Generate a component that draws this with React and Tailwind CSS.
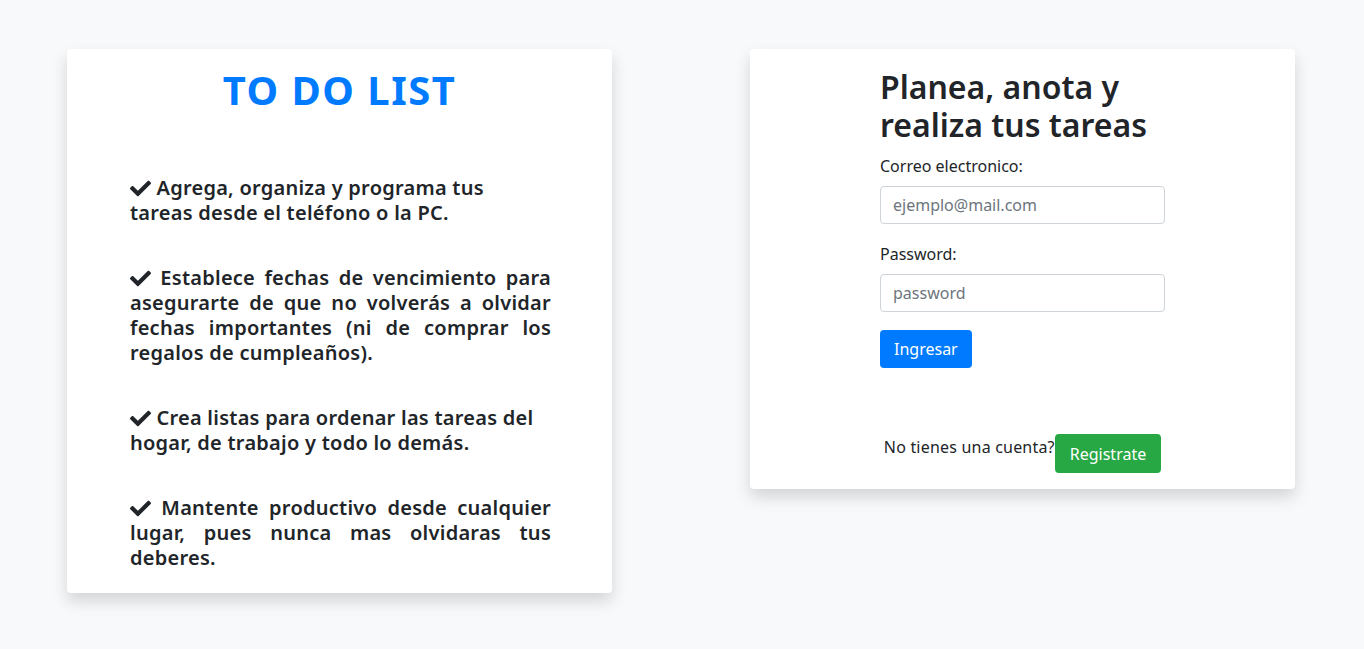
import { FaCheck } from "react-icons/fa";

const items = [
  {
    text: "Agrega, organiza y programa tus tareas desde el teléfono o la PC.",
    justify: false,
  },
  {
    text: "Establece fechas de vencimiento para asegurarte de que no volverás a olvidar fechas importantes (ni de comprar los regalos de cumpleaños).",
    justify: true,
  },
  {
    text: "Crea listas para ordenar las tareas del hogar, de trabajo y todo lo demás.",
    justify: false,
  },
  {
    text: "Mantente productivo desde cualquier lugar, pues nunca mas olvidaras tus deberes.",
    justify: true,
  },
];

const App = () => {
  return (
    <div
      className="min-h-screen bg-[#f8f9fa] text-[#212529]"
      style={{ fontFamily: '"Noto Sans", "Open Sans", sans-serif' }}
    >
      <div className="flex items-start justify-between pl-[67px] pr-[69px] pt-[49px] pb-[57px]">
        {/* Tarjeta izquierda */}
        <div className="w-[545px] bg-white rounded shadow-[0_8px_16px_rgba(0,0,0,0.15)] pt-[17px] pb-[23px]">
          <h1 className="text-center text-[40px] leading-[48px] font-bold tracking-[1.5px] text-[#007bff]">
            TO DO LIST
          </h1>
          <div className="pl-[63px] pr-[61px] mt-[61px] flex flex-col gap-[40px]">
            {items.map((item, i) => (
              <h5
                key={i}
                className={`text-[20px] leading-[25px] font-semibold tracking-[0.25px] ${
                  item.justify ? "text-justify" : "text-left"
                }`}
              >
                <FaCheck className="inline-block w-[21px] h-[21px] align-[-4px]" />{" "}
                {item.text}
              </h5>
            ))}
          </div>
        </div>

        {/* Tarjeta derecha */}
        <div className="w-[545px] bg-white rounded shadow-[0_8px_16px_rgba(0,0,0,0.15)] pt-[19px] pb-[16px] flex flex-col items-center">
          <div className="w-[285px]">
            <h2 className="text-[32px] leading-[38px] font-semibold">
              Planea, anota y realiza tus tareas
            </h2>
            <label className="block mt-[10px] text-[16px] leading-[24px]">
              Correo electronico:
            </label>
            <input
              type="email"
              placeholder="ejemplo@mail.com"
              className="mt-[8px] block w-full h-[38px] px-[12px] border border-[#ced4da] rounded text-[16px] placeholder:text-[#6c757d] outline-none"
            />
            <label className="block mt-[18px] text-[16px] leading-[24px]">
              Password:
            </label>
            <input
              type="password"
              placeholder="password"
              className="mt-[8px] block w-full h-[38px] px-[12px] border border-[#ced4da] rounded text-[16px] placeholder:text-[#6c757d] outline-none"
            />
            <button className="mt-[18px] h-[38px] px-[14px] bg-[#007bff] text-white text-[16px] rounded">
              Ingresar
            </button>
          </div>
          <div className="mt-[66px] flex items-start">
            <p className="text-[16px] leading-[24px] pt-[1px] tracking-[0.2px]">
              No tienes una cuenta?
            </p>
            <button className="h-[39px] px-[15px] bg-[#28a745] text-white text-[16px] rounded">
              Registrate
            </button>
          </div>
        </div>
      </div>
    </div>
  );
};

export default App;
